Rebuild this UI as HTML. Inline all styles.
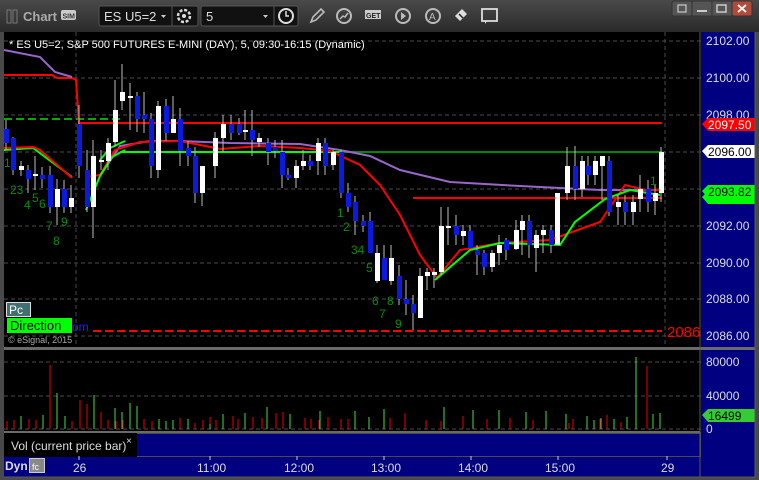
<!DOCTYPE html>
<html><head><style>
body{margin:0;width:759px;height:480px;background:#3a3a3a;overflow:hidden;font-family:"Liberation Sans",sans-serif}
svg{position:absolute;left:0;top:0}
</style></head><body>
<svg width="759" height="480" viewBox="0 0 759 480" xmlns="http://www.w3.org/2000/svg" font-family="Liberation Sans, sans-serif">
<defs><linearGradient id="tb" x1="0" y1="0" x2="0" y2="1"><stop offset="0" stop-color="#4a4a4a"/><stop offset="1" stop-color="#2a2a2a"/></linearGradient></defs>
<rect x="0" y="0" width="759" height="32" fill="url(#tb)"/>
<rect x="0" y="32" width="759" height="448" fill="#4a4a4a"/>
<rect x="7" y="10" width="4" height="13" fill="none" stroke="#777"/><rect x="13" y="10" width="4" height="13" fill="none" stroke="#777"/>
<text x="23" y="21" font-size="13" fill="#aaa" font-weight="bold">Chart</text>
<rect x="61" y="10" width="15" height="10" rx="2" fill="#ccc"/><text x="62.5" y="18.5" font-size="7" fill="#333" font-weight="bold">SIM</text>
<rect x="99" y="6" width="99" height="20" rx="2" fill="#111" stroke="#555"/><line x1="172" y1="6" x2="172" y2="26" stroke="#555"/>
<text x="104" y="21" font-size="13" fill="#ddd">ES U5=2</text><path d="M161 15h5l-2.5 3z" fill="#ccc"/>
<circle cx="184" cy="16" r="6" fill="none" stroke="#ddd" stroke-width="2.5" stroke-dasharray="3 1.7"/><circle cx="184" cy="16" r="2" fill="#ddd"/>
<rect x="201" y="6" width="97" height="20" rx="2" fill="#111" stroke="#555"/><line x1="274" y1="6" x2="274" y2="26" stroke="#555"/>
<text x="206" y="21" font-size="13" fill="#ddd">5</text><path d="M263 15h5l-2.5 3z" fill="#ccc"/>
<circle cx="286" cy="16" r="7" fill="none" stroke="#ddd" stroke-width="2"/><path d="M286 11v5h3" stroke="#ddd" stroke-width="1.5" fill="none"/>
<path d="M311 22l2-5 8-8 3 3-8 8z" fill="none" stroke="#bbb" stroke-width="1.6"/>
<circle cx="344" cy="16" r="7" fill="none" stroke="#bbb" stroke-width="2"/><path d="M340 19l3-3 2 1 3-4" stroke="#bbb" fill="none" stroke-width="1.5"/>
<rect x="365" y="10" width="16" height="9" fill="#ccc"/><text x="366" y="18" font-size="7" font-weight="bold" fill="#222">GET</text>
<circle cx="403" cy="16" r="7" fill="none" stroke="#bbb" stroke-width="2"/><path d="M401 12v8l5-4z" fill="#bbb"/>
<circle cx="433" cy="16" r="7" fill="none" stroke="#bbb" stroke-width="2"/><text x="429" y="20" font-size="10" fill="#bbb">A</text>
<path d="M455 16l7-7 5 5-7 7z" fill="#ddd"/><path d="M459 14l4 4" stroke="#222" stroke-width="1.5"/>
<rect x="482" y="9" width="15" height="12" fill="none" stroke="#ddd" stroke-width="1.8"/><path d="M487 21l-2 3v-3" fill="#ddd"/>
<rect x="672" y="1" width="20" height="15" rx="2" fill="#555" stroke="#333"/><rect x="692" y="1" width="20" height="15" fill="#555" stroke="#333"/><rect x="712" y="1" width="20" height="15" fill="#555" stroke="#333"/><rect x="732" y="1" width="20" height="15" rx="2" fill="#b04a3a" stroke="#333"/>
<path d="M697 11h10" stroke="#ccc" stroke-width="2"/><rect x="717" y="5" width="9" height="7" fill="none" stroke="#ccc" stroke-width="1.5"/><path d="M738 5l8 7M746 5l-8 7" stroke="#eee" stroke-width="2"/>
<rect x="678" y="5" width="8" height="7" fill="none" stroke="#ccc" stroke-width="1.2"/>
<rect x="4" y="32" width="697" height="315" fill="#000"/>
<rect x="701" y="32" width="54" height="315" fill="#000080"/>
<rect x="4" y="350" width="697" height="82" fill="#000"/>
<rect x="701" y="350" width="54" height="107" fill="#000080"/>
<rect x="4" y="432" width="133" height="25" fill="#000"/>
<rect x="137" y="434" width="563" height="22" fill="#000080"/>
<rect x="4" y="457" width="751" height="20" fill="#000080"/>
<rect x="4" y="347" width="751" height="3" fill="#6a6a6a"/>
<g stroke="#4a4a4a" stroke-dasharray="4 3">
<path d="M4 41H701M4 78H701M4 115H701M4 152H701M4 189H701M4 226H701M4 263H701M4 299H701M4 336H701"/>
<path d="M4 362H701M4 396H701M4 429H701"/>
<path d="M76 32V347M665 32V347"/>
</g>
<g fill="#ddd" font-size="12">
<text x="706" y="45">2102.00</text><text x="706" y="82">2100.00</text><text x="706" y="119">2098.00</text><text x="706" y="230">2092.00</text><text x="706" y="267">2090.00</text><text x="706" y="303">2088.00</text><text x="706" y="340">2086.00</text>
<text x="706" y="366">80000</text><text x="706" y="400">40000</text><text x="706" y="433">0</text>
<text x="73" y="472">26</text><text x="197" y="472">11:00</text><text x="284" y="472">12:00</text><text x="371" y="472">13:00</text><text x="458" y="472">14:00</text><text x="545" y="472">15:00</text><text x="661" y="472">29</text>
</g>
<path d="M702 124l6-6h47v13h-47z" fill="#f00"/><text x="708" y="129" font-size="12" fill="#fff">2097.50</text>
<path d="M702 151l6-6h47v13h-47z" fill="#fff"/><text x="708" y="156" font-size="12" fill="#000">2096.00</text>
<path d="M702 197l6-6h47v13h-47z" fill="#0f0"/><path d="M702 191l6-6h47v13h-47z" fill="#0f0"/><text x="708" y="196" font-size="12" fill="#000">2093.82</text>
<path d="M702 415l6-6h47v13h-47z" fill="#3c3"/><text x="708" y="420" font-size="12" fill="#000">16499</text>
<text x="9" y="48" font-size="11" fill="#fff">* ES U5=2, S&amp;P 500 FUTURES E-MINI (DAY), 5, 09:30-16:15 (Dynamic)</text>
<path d="M4 119H123" stroke="#0a0" stroke-width="2" stroke-dasharray="8 4"/>
<path d="M93 331H662" stroke="#f00" stroke-width="2" stroke-dasharray="8 4"/>
<text x="667" y="337" font-size="15" fill="#f00">2086</text>
<path d="M340 152H662" stroke="#080" stroke-width="2"/>
<path d="M120 152H340" stroke="#0f0" stroke-width="2"/>
<path d="M4 150L33 148L72 177M100 160L110 148L125 141" stroke="#0f0" stroke-width="2" fill="none"/>
<path d="M4 75H52L57 78H72L76 80L79 123H662" stroke="#f00" stroke-width="2" fill="none"/>
<path d="M413 198H662" stroke="#f00" stroke-width="2"/>
<path d="M4 148L33 147L40 150L72 178" stroke="#f00" stroke-width="2" fill="none"/>
<path d="M4 50L40 57L55 72L72 77M100 176L120 146L150 141L180 141L230 143L300 144L340 150L370 156L400 170L450 182L520 186L600 190L660 190" stroke="#9966cc" stroke-width="2" fill="none"/>
<path d="M86 177L100 175L115 150L140 142L180 141L220 149L260 146L300 148L330 151L360 165L380 185L400 215L420 255L437 278L460 250L500 243L550 240L600 222L625 185L645 190L660 190" stroke="#f00" stroke-width="2" fill="none"/>
<path d="M86 210L100 176L112 157L125 150M435 280L470 250L500 243L560 245L575 222L605 199L630 190L660 195" stroke="#0f0" stroke-width="2" fill="none"/>
<g stroke="#bbb" stroke-width="1">
<path d="M6 120V150M13 137V175M21 161V176M28 165V193M35 156V190M42 167V188M50 166V213M57 179V225M64 180V213M71 185V213M79 105V178M87 150V212M93 140V238M101 150V170M108 138V170M115 80V147M122 64V110M130 83V130M137 92V132M144 92V133M151 113V178M158 101V178M166 99V141M173 96V133M180 108V166M188 141V166M195 147V203M202 166V206M215 132V178M223 115V152M231 115V140M239 118V135M245 110V140M252 110V156M259 133V147M268 138V165M275 140V158M282 140V188M288 168V180M296 160V188M303 150V170M310 155V170M318 138V175M325 138V175M333 150V170M341 150V198M348 183V212M355 196V235M363 215V232M370 212V253M377 245V283M384 245V280M391 245V285M399 265V305M406 280V315M413 295V330M420 268V318M427 268V290M434 268V288M441 207V275M448 207V245M456 215V245M463 225V245M470 225V248M477 245V275M484 250V275M492 250V272M499 235V265M506 238V260M516 220V250M522 215V255M529 215V258M536 230V272M543 225V253M551 225V253M557 193V245M567 147V200M575 146V200M582 156V197M588 156V185M595 156V185M602 156V200M609 156V216M618 195V225M625 195V225M633 195V225M640 175V212M648 180V212M655 185V215M661 147V202"/>
</g>
<g fill="#fff">
<rect x="19" y="166" width="5" height="4"/><rect x="33" y="174" width="5" height="2"/><rect x="55" y="189" width="5" height="18"/><rect x="69" y="198" width="5" height="9"/><rect x="91" y="156" width="5" height="51"/><rect x="99" y="160" width="5" height="2"/><rect x="106" y="143" width="5" height="18"/><rect x="113" y="110" width="5" height="32"/><rect x="120" y="92" width="5" height="9"/><rect x="128" y="96" width="5" height="2"/><rect x="156" y="106" width="5" height="64"/><rect x="171" y="119" width="5" height="14"/><rect x="200" y="166" width="5" height="27"/><rect x="213" y="138" width="5" height="28"/><rect x="221" y="124" width="5" height="14"/><rect x="243" y="130" width="5" height="2"/><rect x="257" y="138" width="5" height="4"/><rect x="294" y="166" width="5" height="12"/><rect x="301" y="161" width="5" height="5"/><rect x="316" y="143" width="5" height="18"/><rect x="331" y="152" width="5" height="13"/><rect x="375" y="253" width="5" height="28"/><rect x="389" y="258" width="5" height="23"/><rect x="418" y="276" width="5" height="42"/><rect x="425" y="272" width="5" height="4"/><rect x="432" y="272" width="5" height="3"/><rect x="439" y="226" width="5" height="46"/><rect x="446" y="226" width="5" height="2"/><rect x="461" y="231" width="5" height="5"/><rect x="490" y="253" width="5" height="14"/><rect x="497" y="245" width="5" height="8"/><rect x="514" y="230" width="5" height="19"/><rect x="520" y="221" width="5" height="9"/><rect x="534" y="235" width="5" height="13"/><rect x="541" y="230" width="5" height="5"/><rect x="555" y="193" width="5" height="52"/><rect x="565" y="166" width="5" height="27"/><rect x="580" y="161" width="5" height="28"/><rect x="593" y="161" width="5" height="14"/><rect x="600" y="156" width="5" height="10"/><rect x="616" y="202" width="5" height="5"/><rect x="631" y="202" width="5" height="10"/><rect x="638" y="189" width="5" height="10"/><rect x="653" y="193" width="5" height="8"/><rect x="659" y="152" width="5" height="41"/>
</g>
<g fill="#0a1adf">
<rect x="4" y="129" width="5" height="14"/><rect x="11" y="138" width="5" height="32"/><rect x="26" y="170" width="5" height="9"/><rect x="40" y="175" width="5" height="4"/><rect x="48" y="175" width="5" height="32"/><rect x="62" y="189" width="5" height="18"/><rect x="77" y="124" width="5" height="42"/><rect x="85" y="170" width="5" height="37"/><rect x="135" y="96" width="5" height="23"/><rect x="142" y="115" width="5" height="4"/><rect x="149" y="119" width="5" height="47"/><rect x="164" y="106" width="5" height="27"/><rect x="178" y="119" width="5" height="32"/><rect x="186" y="148" width="5" height="8"/><rect x="193" y="156" width="5" height="37"/><rect x="229" y="124" width="5" height="9"/><rect x="237" y="124" width="5" height="9"/><rect x="250" y="130" width="5" height="10"/><rect x="266" y="143" width="5" height="9"/><rect x="273" y="147" width="5" height="4"/><rect x="280" y="152" width="5" height="23"/><rect x="286" y="175" width="5" height="3"/><rect x="308" y="161" width="5" height="5"/><rect x="323" y="143" width="5" height="23"/><rect x="339" y="152" width="5" height="41"/><rect x="346" y="193" width="5" height="14"/><rect x="353" y="202" width="5" height="19"/><rect x="361" y="221" width="5" height="5"/><rect x="368" y="221" width="5" height="32"/><rect x="382" y="258" width="5" height="22"/><rect x="397" y="276" width="5" height="23"/><rect x="404" y="299" width="5" height="5"/><rect x="411" y="304" width="5" height="9"/><rect x="454" y="226" width="5" height="9"/><rect x="468" y="231" width="5" height="17"/><rect x="475" y="250" width="5" height="5"/><rect x="482" y="253" width="5" height="14"/><rect x="504" y="240" width="5" height="10"/><rect x="527" y="221" width="5" height="24"/><rect x="549" y="230" width="5" height="15"/><rect x="573" y="166" width="5" height="23"/><rect x="586" y="166" width="5" height="9"/><rect x="607" y="161" width="5" height="51"/><rect x="623" y="202" width="5" height="10"/><rect x="646" y="189" width="5" height="13"/>
</g>
<g fill="#0a8a0a" font-size="12">
<text x="4" y="167">1</text><text x="10" y="194">23</text><text x="24" y="209">4</text><text x="32" y="202">5</text><text x="39" y="208">6</text><text x="46" y="230">7</text><text x="61" y="226">9</text><text x="53" y="245">8</text>
<text x="337" y="217">1</text><text x="343" y="231">2</text><text x="351" y="254">34</text><text x="366" y="272">5</text><text x="372" y="305">6</text><text x="379" y="318">7</text><text x="387" y="305">8</text><text x="395" y="328">9</text><text x="650" y="185">1</text>
</g>
<rect x="6.5" y="302.5" width="24" height="14" fill="#407070" stroke="#ddd"/><text x="9" y="314" font-size="12" fill="#fff">Pc</text>
<rect x="7" y="318" width="65" height="15" fill="#00ff00"/><text x="10" y="330" font-size="13" fill="#000">Direction</text>
<text x="72" y="331" font-size="12" fill="#22f">om</text>
<text x="8" y="343" font-size="9" fill="#aaa">© eSignal, 2015</text>
<g stroke-width="1">
<path d="M7 429V421M14 429V420M29 429V419M36 429V420M50 429V365M72 429V421M80 429V400M87 429V404M101 429V412M108 429V420M116 429V421M123 429V420M137 429V422M144 429V419M152 429V421M173 429V423M180 429V418M195 429V423M203 429V420M210 429V417M216 429V420M233 429V416M238 429V419M245 429V420M253 429V417M262 429V418M276 429V413M283 429V412M305 429V418M311 429V419M319 429V420M328 429V417M341 429V419M348 429V419M369 429V423M390 429V418M405 429V413M426 429V420M441 429V421M463 429V416M487 429V419M510 429V418M533 429V420M569 429V423M573 429V419M600 429V419M607 429V415M621 429V422M647 429V366" stroke="#e00"/>
<path d="M21 429V416M43 429V415M57 429V393M65 429V416M94 429V395M115 429V408M122 429V412M130 429V403M137 429V406M159 429V419M166 429V421M173 429V420M188 429V419M210 429V424M223 429V414M245 429V413M267 429V407M290 429V414M320 429V411M355 429V411M369 429V417M384 429V409M444 429V407M473 429V410M499 429V410M526 429V412M546 429V411M566 429V414M587 429V416M594 429V420M601 429V418M614 429V419M627 429V417M636 429V357M653 429V414M660 429V413" stroke="#4d4"/>
</g>
<path d="M4 432H700" stroke="#6a6a6a" stroke-width="2"/>
<text x="11" y="450" font-size="12" fill="#ddd">Vol (current price bar)</text>
<text x="126" y="444" font-size="10" fill="#ddd">×</text>
<text x="5" y="470" font-size="12" font-weight="bold" fill="#ddd">Dyn</text>
<rect x="29.5" y="458.5" width="15" height="14" fill="#888" stroke="#ccc"/><text x="32" y="470" font-size="9" fill="#fff">fc</text>
<path d="M79 456V460M210 456V460M297 456V460M384 456V460M471 456V460M558 456V460M667 456V460" stroke="#ccc"/>
<path d="M700 32V477M755 32V477M4 477H755" stroke="#5a5a5a"/>
</svg>
</body></html>
